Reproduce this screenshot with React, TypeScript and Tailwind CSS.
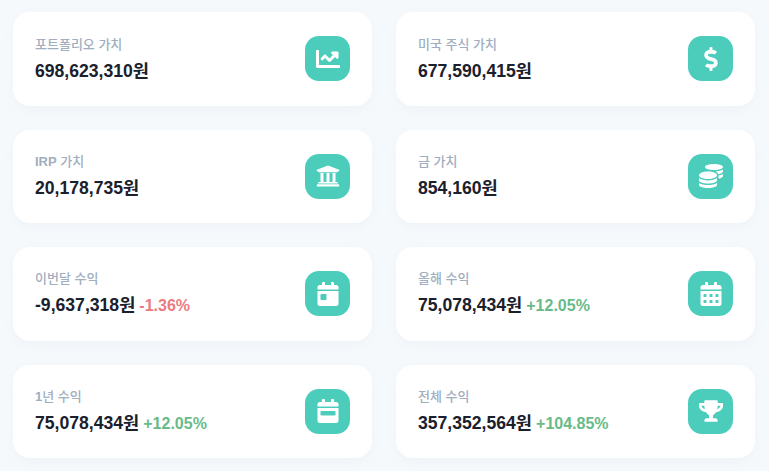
import type { ReactNode } from 'react'
import { FaCalendarAlt, FaCalendarDay, FaCalendarWeek, FaChartLine, FaCoins, FaDollarSign, FaTrophy, FaUniversity } from 'react-icons/fa'

type CardProps = {
  label: ReactNode
  value: string
  rate?: string
  up?: boolean
  icon: ReactNode
}

function StatCard({ label, value, rate, up, icon }: CardProps) {
  return (
    <div className="h-[93.5px] bg-white rounded-[17px] px-[22px] flex items-center justify-between shadow-[0_4px_12px_rgba(100,130,160,0.05)]">
      <div>
        <div className="text-[13px] leading-[20px] font-medium text-[#a0aec0]">{label}</div>
        <div className="mt-[4px] text-[17.6px] leading-[24px] font-bold text-[#1a202c]">
          {value}
          {rate && (
            <span className={`ml-[4px] text-[16px] font-bold ${up ? 'text-[#68bb88]' : 'text-[#ec7a80]'}`}>{rate}</span>
          )}
        </div>
      </div>
      <div className="w-[45px] h-[45px] rounded-[14px] bg-[#4ccdbc] flex items-center justify-center text-white">
        {icon}
      </div>
    </div>
  )
}

export default function App() {
  return (
    <div className="min-h-screen bg-[#f6f9fc] pl-[13px] pr-[14px] pt-[12px] font-['Liberation_Sans','Noto_Sans_CJK_KR',sans-serif]">
      <div className="grid grid-cols-2 gap-x-[24px] gap-y-[24px]">
        <StatCard label="포트폴리오 가치" value="698,623,310원" icon={<FaChartLine size={24} />} />
        <StatCard label="미국 주식 가치" value="677,590,415원" icon={<FaDollarSign size={24} />} />
        <StatCard label={<><span className="font-bold">IRP</span> 가치</>} value="20,178,735원" icon={<FaUniversity size={24} />} />
        <StatCard label="금 가치" value="854,160원" icon={<FaCoins size={24} />} />
        <StatCard label="이번달 수익" value="-9,637,318원" rate="-1.36%" icon={<FaCalendarDay size={24} />} />
        <StatCard label="올해 수익" value="75,078,434원" rate="+12.05%" up icon={<FaCalendarAlt size={24} />} />
        <StatCard label={<><span className="font-bold">1</span>년 수익</>} value="75,078,434원" rate="+12.05%" up icon={<FaCalendarWeek size={24} />} />
        <StatCard label="전체 수익" value="357,352,564원" rate="+104.85%" up icon={<FaTrophy size={24} />} />
      </div>
    </div>
  )
}
